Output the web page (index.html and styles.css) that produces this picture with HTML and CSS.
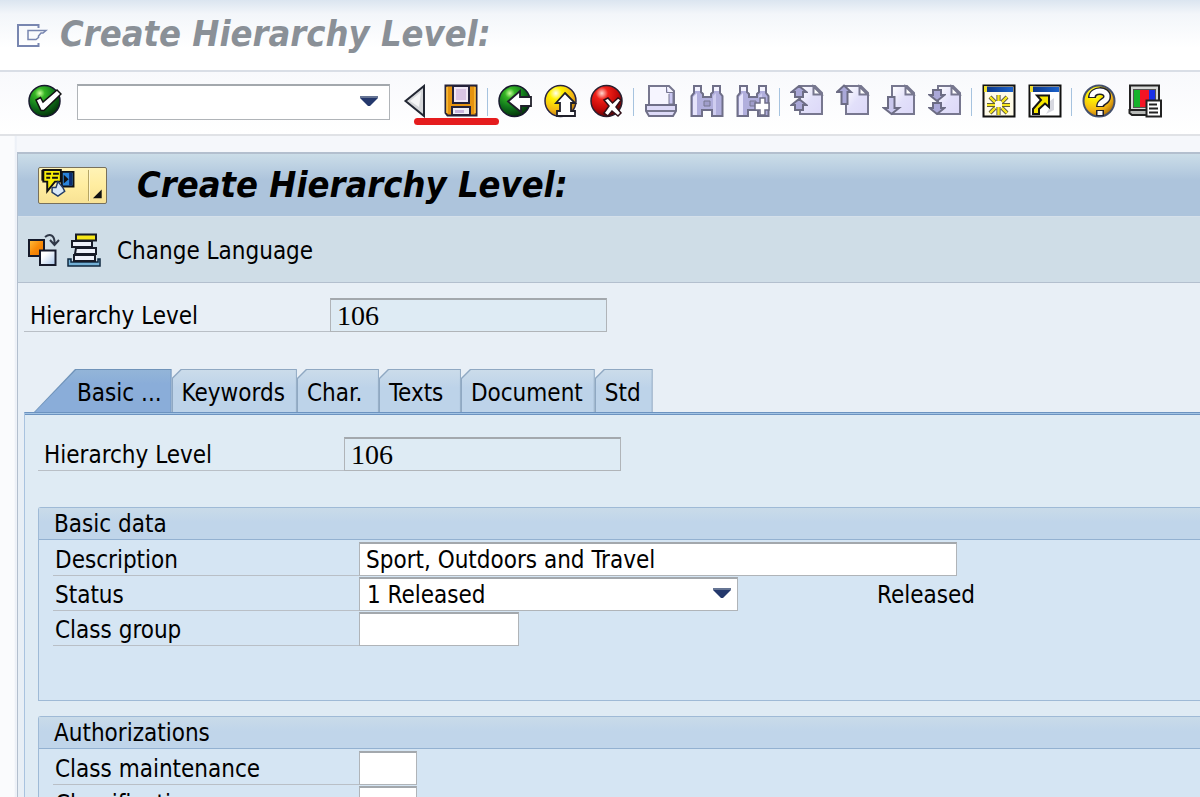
FILE: index.html
```html
<!DOCTYPE html>
<html lang="en">
<head>
<meta charset="utf-8">
<title>Create Hierarchy Level:</title>
<link rel="stylesheet" href="styles.css">
</head>
<body>
<svg class="defs" aria-hidden="true">
  <defs>
    <radialGradient id="green" cx="0.35" cy="0.25" r="0.8"><stop offset="0" stop-color="#c8ff9a"/><stop offset="0.2" stop-color="#35b524"/><stop offset="0.55" stop-color="#127a1c"/><stop offset="1" stop-color="#022c08"/></radialGradient>
    <radialGradient id="yellow" cx="0.35" cy="0.25" r="0.8"><stop offset="0" stop-color="#fffff0"/><stop offset="0.25" stop-color="#fff200"/><stop offset="0.7" stop-color="#f3b414"/><stop offset="1" stop-color="#a86a08"/></radialGradient>
    <radialGradient id="red" cx="0.35" cy="0.25" r="0.8"><stop offset="0" stop-color="#ffd8d0"/><stop offset="0.25" stop-color="#f02018"/><stop offset="0.65" stop-color="#c00808"/><stop offset="1" stop-color="#4a0204"/></radialGradient>
    <linearGradient id="window" x1="0" x2="1"><stop offset="0" stop-color="#0a3484"/><stop offset="1" stop-color="#1b62cc"/></linearGradient>
    <linearGradient id="lilac" x1="0" x2="1" y1="0" y2="1"><stop offset="0" stop-color="#ffffff"/><stop offset="0.5" stop-color="#e2e0fa"/><stop offset="1" stop-color="#dcd8f8"/></linearGradient>
    <linearGradient id="orange" x1="0" x2="1" y1="0" y2="1"><stop offset="0" stop-color="#ffc040"/><stop offset="0.5" stop-color="#f88a08"/><stop offset="1" stop-color="#e87400"/></linearGradient>
    <linearGradient id="ice" x1="0" x2="1" y1="0" y2="1"><stop offset="0.3" stop-color="#ffffff"/><stop offset="1" stop-color="#a8c4e8"/></linearGradient>
    <symbol id="page" viewBox="0 0 34 34"><path d="M10 2H25L32 9V30H10Z" fill="url(#lilac)" stroke="#77778f" stroke-width="2"/><path d="M23.500 2.500V10.500H31.500Z" fill="#fff" stroke="#77778f" stroke-width="2"/></symbol>
    <symbol id="arrow" viewBox="0 0 18 13"><path d="M9 1L16.500 7H13V12H5V7H1.500Z" fill="#aaa8d8" stroke="#6c6c84" stroke-width="2"/></symbol>
    <symbol id="binoculars" viewBox="0 0 34 34"><path d="M4 2H11V8L13 10V13H21V10L23 8V2H30V9L32.500 12V32H22V26H12V32H1.500V12L4 9Z" fill="#b1afdd" stroke="#6f6f88" stroke-width="2"/><path d="M5 3H10V7H5ZM24 3H29V7H24Z" fill="#f4f3ff"/><path d="M4 12L7 9V31H3V13Z" fill="#e6e4fb"/><path d="M23 12L26 9V31H23Z" fill="#cfcdf0"/><path d="M14 17H20V22H14Z" fill="#a09ecb" stroke="#77778f"/></symbol>
  </defs>
</svg>

<header class="titlebar">
  <svg class="exit-icon" viewBox="0 0 32 26" fill="none" stroke="#7886b0" stroke-width="2"><path d="M22.500 7V4H2V25H22.500V22"/><path d="M12 9.500H30L27 12H25L22.500 15V16.500L20 18.500H12Z" stroke-width="1.500"/></svg>
  <h1 class="title">Create Hierarchy Level:</h1>
</header>

<div class="toolbar" role="toolbar" aria-label="Standard">
  <button class="tool" aria-label="Enter"><svg viewBox="0 0 34 34"><circle cx="16.500" cy="17" r="15.500" fill="url(#green)" stroke="#18182e" stroke-width="1.500"/><path d="M8 16L12.500 13.500L15 18L29 6L33 10L16 26.500H13Z" fill="#fff" stroke="#111" stroke-width="1.500"/></svg></button>
  <div class="combo">
    <input class="field command" type="text" aria-label="Command">
    <button class="combo-open" aria-label="Command history"><svg viewBox="0 0 18 10"><path d="M0 0H18V2L10 10H8L0 2Z" fill="#24386c"/><path d="M0 0H18V2H0Z" fill="#667594"/></svg></button>
  </div>
  <button class="tool" aria-label="Close command field"><svg viewBox="0 0 34 34"><path d="M26 2V32L7.500 17Z" fill="#d5d7da" stroke="#222733" stroke-width="2"/><path d="M23 8L12 17L21 23Z" fill="#f4f5f6"/></svg></button>
  <button class="tool" aria-label="Save"><svg viewBox="0 0 34 34"><path d="M1.500 1.500H32.500V31.500H3.500L1.500 29Z" fill="#e5930f" stroke="#25233a" stroke-width="2"/><path d="M9 2H25V19H9Z" fill="#f1e8f6" stroke="#25233a" stroke-width="2"/><path d="M12 5H22V16H12Z" fill="#dac5e4"/><path d="M8 23H26V31H8Z" fill="#f2eff6" stroke="#25233a" stroke-width="2"/><path d="M11 26H20V29H11Z" fill="#cbb6de"/><path d="M3 3V29M31 3V29" stroke="#ffc23e" stroke-width="1.500"/></svg></button>
  <span class="sep"></span>
  <button class="tool" aria-label="Back"><svg viewBox="0 0 34 34"><circle cx="16.500" cy="17" r="15.500" fill="url(#green)" stroke="#18182e" stroke-width="1.500"/><path d="M10 17.500L22 7V13H33V22H23V28Z" fill="#fff" stroke="#20202a" stroke-width="1.800"/></svg></button>
  <button class="tool" aria-label="Exit"><svg viewBox="0 0 34 34"><circle cx="16.500" cy="17" r="15.500" fill="url(#yellow)" stroke="#282340" stroke-width="1.500"/><path d="M21 9L31 19H27V27H31V32H13V27H16V19H12Z" fill="#fff" stroke="#20202a" stroke-width="1.800"/></svg></button>
  <button class="tool" aria-label="Cancel"><svg viewBox="0 0 34 34"><circle cx="16.500" cy="17" r="15.500" fill="url(#red)" stroke="#282030" stroke-width="1.500"/><path d="M14 16L18 14L22.500 19L28 14L31 16L26 23L31 29L28 32L22 27L18 32L14 29L19 22Z" fill="#fff" stroke="#301018" stroke-width="1.500"/></svg></button>
  <span class="sep"></span>
  <button class="tool" aria-label="Print"><svg viewBox="0 0 34 34"><path d="M5 21V2H25L30 7V21Z" fill="#f6f5ff" stroke="#77778f" stroke-width="2"/><path d="M22.500 2V8.500H29V20H25V10" fill="#cac7f2" stroke="#77778f"/><path d="M2 21H32V27L29 32H5L2 27Z" fill="#dddaf8" stroke="#6f6f88" stroke-width="2"/><path d="M3 27H31" stroke="#77778f" stroke-width="2"/></svg></button>
  <button class="tool" aria-label="Find"><svg viewBox="0 0 34 34"><use href="#binoculars"/></svg></button>
  <button class="tool" aria-label="Find next"><svg viewBox="0 0 34 34"><use href="#binoculars"/><path d="M24 14H29V19H33V26H29V31H24V26H19V19H24Z" fill="#fff" stroke="#6f6f88" stroke-width="1.500"/></svg></button>
  <span class="sep"></span>
  <button class="tool" aria-label="First page"><svg viewBox="0 0 34 34"><use href="#page"/><use href="#arrow" x="0" y="1" width="18" height="13"/><use href="#arrow" x="0" y="14" width="18" height="13"/></svg></button>
  <button class="tool" aria-label="Previous page"><svg viewBox="0 0 34 34"><use href="#page"/><path d="M8 1.500L15 8H11.500V20H5.500V8H1Z" fill="#aaa8d8" stroke="#6c6c84" stroke-width="2"/></svg></button>
  <button class="tool" aria-label="Next page"><svg viewBox="0 0 34 34"><use href="#page"/><path d="M6 13H12.500V24H17L9.500 30L2 24H6Z" fill="#c9c7ed" stroke="#6c6c84" stroke-width="2"/></svg></button>
  <button class="tool" aria-label="Last page"><svg viewBox="0 0 34 34"><use href="#page"/><g transform="matrix(1 0 0 -1 0 31)"><use href="#arrow" x="0" y="0" width="18" height="13"/><use href="#arrow" x="0" y="13" width="18" height="13"/></g></svg></button>
  <span class="sep"></span>
  <button class="tool" aria-label="New session"><svg viewBox="0 0 34 34"><path d="M1.500 1.500H32.500V32.500H1.500Z" fill="#fffbe8" stroke="#111" stroke-width="2"/><path d="M3 3H31V8H3Z" fill="url(#window)"/><path d="M2 2H5V8H2Z" fill="#f0df30"/><path d="M16.500 11V17M16.500 23V31M5 21H13M20 21H28M8 13L13 18M25 13L20 18M8 29L13 24M25 29L20 24" stroke="#303044" stroke-width="4"/><path d="M16.500 11V17M16.500 23V31M5 21H13M20 21H28M8 13L13 18M25 13L20 18M8 29L13 24M25 29L20 24" stroke="#f5e51c" stroke-width="2.500"/></svg></button>
  <button class="tool" aria-label="Create shortcut"><svg viewBox="0 0 34 34"><path d="M1.500 1.500H32.500V32.500H1.500Z" fill="#fff" stroke="#111" stroke-width="2"/><path d="M3 3H31V8H3Z" fill="url(#window)"/><path d="M2 2H5V8H2Z" fill="#f0df30"/><path d="M22 23V17L26 14V26L18 30Z" fill="#d7d8e0"/><path d="M9 11.500H21V23L17 19.500L11 25V30H5V25L13 16Z" fill="#f7e600" stroke="#151515" stroke-width="2"/></svg></button>
  <span class="sep"></span>
  <button class="tool" aria-label="Help"><svg viewBox="0 0 34 34"><circle cx="17" cy="17" r="15.500" fill="url(#yellow)" stroke="#44506c" stroke-width="2"/><path d="M10 14C10 5 26 5 25 13C25 18 18 17 18 23M18 26V32" fill="none" stroke="#20202a" stroke-width="8"/><path d="M10 13C10 5 26 5 25 13C25 18 18 17 18 22M18 27V31" fill="none" stroke="#fff" stroke-width="5"/></svg></button>
  <button class="tool" aria-label="Customize layout"><svg viewBox="0 0 34 34"><path d="M2 1.500H31V26H2Z" fill="#d8dad8" stroke="#222" stroke-width="2"/><path d="M5 5H28V24H5Z" fill="#555"/><path d="M6 6H12V23H6Z" fill="#16b32c"/><path d="M12 6H21V23H12Z" fill="#f41424"/><path d="M21 6H27V23H21Z" fill="#1830e8"/><path d="M1.500 26H20V31H4L1.500 29Z" fill="#b8bab8" stroke="#222" stroke-width="2"/><path d="M18.500 16.500H33V32.500H18.500Z" fill="#fff" stroke="#222" stroke-width="2"/><path d="M21 20.500H29M21 24.500H30M21 28.500H30" stroke="#222" stroke-width="2"/></svg></button>
  <span class="marker"></span>
</div>

<main class="work">
  <div class="screen">
    <div class="screen-title">
      <button class="services" aria-label="Services for object">
        <svg viewBox="0 0 68 36"><path d="M50.500 2V34" stroke="#b09f60"/><path d="M51.500 2V34" stroke="#fff6cc"/><path d="M64 22V31H55Z" fill="#111"/><path d="M4 2H22V14H16L8 24V14H4Z" fill="#f8ee08" stroke="#111" stroke-width="2"/><path d="M3 2V13" stroke="#111" stroke-width="2"/><path d="M7 6H12M14 6H20M7 10H11M13 10H19" stroke="#111" stroke-width="2"/><path d="M23 4H35V19H23Z" fill="#2a84da" stroke="#111" stroke-width="2"/><path d="M32 5V18" stroke="#0a2c70" stroke-width="3"/><path d="M25 7L30 11.500L25 16Z" fill="#111"/><path d="M19 14L24 20L26 24L19 29L13 25V20L17 20Z" fill="#d8e8f8" stroke="#233c66" stroke-width="1.500"/></svg>
      </button>
      <h2 class="title">Create Hierarchy Level:</h2>
    </div>
    <div class="actions">
      <button class="action" aria-label="Copy from"><svg viewBox="0 0 34 34"><path d="M2 7H17V23H2Z" fill="url(#orange)" stroke="#15192a" stroke-width="2"/><path d="M13 17.500H28.500V32H13Z" fill="url(#ice)" stroke="#15192a" stroke-width="2"/><path d="M18 4C23 0 28 2 27.500 11M23 7L27.500 12L32 7" fill="none" stroke="#303848" stroke-width="2"/></svg></button>
      <button class="action" aria-label="Hierarchy"><svg viewBox="0 0 34 34"><path d="M1 26H4V29H31V26H33V33H1Z" fill="#73b0d6" stroke="#102840" stroke-width="1.500"/><path d="M9 1.500H29V7.500H9Z" fill="#f8e818" stroke="#171b28" stroke-width="2"/><path d="M5 8H25V14H5ZM9 15H29V21H8ZM7 22H28V28H7Z" fill="#eef1fa" stroke="#171b28" stroke-width="2"/></svg></button>
      <button class="action text">Change Language</button>
    </div>

    <div class="content">
      <div class="row">
        <label class="label" for="level">Hierarchy Level</label>
        <input class="field readonly" id="level" type="text" value="106" readonly>
      </div>

      <div class="tabs" role="tablist">
        <button class="tab active" role="tab" aria-selected="true">Basic ...</button>
        <button class="tab" role="tab">Keywords</button>
        <button class="tab short" role="tab">Char.</button>
        <button class="tab short" role="tab">Texts</button>
        <button class="tab" role="tab">Document</button>
        <button class="tab" role="tab">Std</button>
      </div>

      <div class="panel" role="tabpanel">
        <div class="row">
          <label class="label" for="tab-level">Hierarchy Level</label>
          <input class="field readonly" id="tab-level" type="text" value="106" readonly>
        </div>

        <section class="group basic">
          <h3 class="group-title">Basic data</h3>
          <div class="row">
            <label class="label" for="description">Description</label>
            <input class="field description" id="description" type="text" value="Sport, Outdoors and Travel">
          </div>
          <div class="row">
            <label class="label" for="status">Status</label>
            <div class="combo">
              <select class="field status" id="status"><option>1 Released</option></select>
              <svg class="combo-arrow" viewBox="0 0 18 10"><path d="M0 0H18V2L10 10H8L0 2Z" fill="#24386c"/><path d="M0 0H18V2H0Z" fill="#667594"/></svg>
            </div>
            <span class="status-text">Released</span>
          </div>
          <div class="row">
            <label class="label" for="class-group">Class group</label>
            <input class="field class-group" id="class-group" type="text">
          </div>
        </section>

        <section class="group">
          <h3 class="group-title">Authorizations</h3>
          <div class="row">
            <label class="label" for="maintenance">Class maintenance</label>
            <input class="field auth" id="maintenance" type="text">
          </div>
          <div class="row">
            <label class="label" for="classification">Classification</label>
            <input class="field auth" id="classification" type="text">
          </div>
        </section>
      </div>
    </div>
  </div>
</main>
</body>
</html>
```

FILE: styles.css
```css
* {
  box-sizing: border-box;
}

body {
  display: flex;
  flex-direction: column;
  height: 100vh;
  margin: 0;
  overflow: hidden;
  background: #f5f7fb;
  color: #000;
  font: 24px/32px "DejaVu Sans Condensed", "DejaVu Sans", sans-serif;
}

button,
input,
select {
  margin: 0;
  padding: 0;
  border: 0;
  border-radius: 0;
  background: none;
  color: inherit;
  font: inherit;
}

svg {
  display: block;
}

.defs {
  position: absolute;
  width: 0;
  height: 0;
}

.title {
  margin: 0;
  font: italic bold 36px/44px "DejaVu Sans Condensed", "DejaVu Sans", sans-serif;
  white-space: nowrap;
}

.titlebar {
  display: flex;
  flex-shrink: 0;
  align-items: center;
  gap: 12px;
  height: 72px;
  padding: 0 16px 2px;
  border-bottom: 2px solid #d9dee6;
  background: linear-gradient(#dbe5f0, #f3f6fa 14px, #fff 48px);
}

.titlebar .title {
  color: #8a9097;
}

.exit-icon {
  width: 32px;
  height: 26px;
}

.toolbar {
  position: relative;
  display: flex;
  flex-shrink: 0;
  align-items: center;
  height: 64px;
  padding: 0 22px 2px;
  border-bottom: 2px solid #e0e2e6;
  background: linear-gradient(#f8f9fc, #fff);
}

.tool {
  display: flex;
  flex: 0 0 46px;
  align-items: center;
  justify-content: center;
  height: 44px;
  padding-bottom: 2px;
}

.tool svg,
.action svg {
  width: 34px;
  height: 34px;
}

.sep {
  flex: 0 0 8px;
  height: 28px;
  background: linear-gradient(#a6c3df, #a6c3df) 3px 0 / 1px 100% no-repeat;
}

.marker {
  position: absolute;
  left: 414px;
  top: 46px;
  width: 85px;
  height: 7px;
  border-radius: 4px;
  background: #e51c1e;
}

.combo {
  position: relative;
  display: flex;
}

.toolbar .combo {
  margin: 0 2px 0 9px;
}

.combo-open,
.combo-arrow {
  position: absolute;
  right: 12px;
  top: 12px;
  width: 18px;
}

.combo-arrow {
  right: 7px;
  top: 11px;
  pointer-events: none;
}

.field {
  height: 34px;
  padding: 0 6px;
  border: 1px solid #b0b4b8;
  border-top: 2px solid #a3a8ad;
  background: #fff;
  appearance: none;
}

.command {
  width: 313px;
  height: 36px;
  padding-right: 34px;
}

.work {
  flex: 1;
  padding: 16px 0 0 17px;
  background: linear-gradient(90deg, #fafbfd 14px, #e8edf5 16px, transparent 17px);
}

.screen {
  display: flex;
  flex-direction: column;
  min-height: 100%;
  border-top: 2px solid #b3bfce;
  border-left: 1px solid #b3bfce;
  background: #e8eff6;
}

.screen-title {
  display: flex;
  align-items: center;
  gap: 30px;
  height: 63px;
  padding: 0 20px;
  border-bottom: 1px solid #d5e0ea;
  background: linear-gradient(#cbdde8, #adc4dc 26px);
}

.services {
  width: 69px;
  height: 37px;
  border: 1px solid #77705c;
  border-radius: 2px;
  background: linear-gradient(#fff3b6, #ffeda0 50%, #f8e294);
}

.services svg {
  width: 100%;
  height: 100%;
}

.actions {
  display: flex;
  align-items: center;
  gap: 6px;
  height: 66px;
  padding-left: 9px;
  border-bottom: 1px solid #b3bfce;
  background: #cfdde7;
}

.action.text {
  margin-left: 10px;
  padding-top: 2px;
}

.content {
  flex: 1;
  padding: 15px 0 0 6px;
}

.row {
  display: flex;
  height: 35px;
}

.label {
  width: 306px;
  height: 34px;
  padding-left: 6px;
  border-bottom: 1px solid #b9bfc6;
  line-height: 36px;
  white-space: nowrap;
}

.readonly {
  width: 277px;
  background: #deebf4;
  font: 28px/30px "Liberation Serif", serif;
}

.group .label {
  padding-left: 2px;
}

.tabs {
  display: flex;
  margin: 36px 0 0 10px;
}

.tab {
  position: relative;
  z-index: 0;
  height: 43px;
  padding: 4px 12px 0 10px;
  background: #8fa8c2;
  clip-path: polygon(0 9px, 9px 0, 100% 0, 100% 100%, 0 100%);
  text-align: left;
  white-space: nowrap;
}

.tab.short {
  min-width: 82px;
}

.tab::before {
  content: "";
  position: absolute;
  z-index: -1;
  inset: 1px 1px 0;
  background: linear-gradient(#cbdcea, #bdd3e9 18px);
  clip-path: polygon(0 9px, 9px 0, 100% 0, 100% 100%, 0 100%);
}

.tab.active {
  padding: 4px 10px 0 43px;
  background: #6f93b9;
  clip-path: polygon(41px 0, 100% 0, 100% 100%, 0 100%);
}

.tab.active::before {
  background: linear-gradient(#93b5d8, #8aadd9 14px);
  clip-path: polygon(41px 0, 100% 0, 100% 100%, 0 100%);
}

.panel {
  padding: 24px 0 40px 13px;
  border-top: 1px solid #6c93c0;
  border-left: 1px solid #a9c3df;
  background: linear-gradient(#a3c4e4 1px, #6c93c0 1px, #6c93c0 2px, #dfebf4 2px);
}

.group {
  margin-bottom: 15px;
  padding-bottom: 16px;
  border: 1px solid #9fbad6;
  border-right: 0;
  border-radius: 3px 0 0 0;
  background: #d5e5f3;
}

.panel > .row {
  margin-bottom: 35px;
}

.basic {
  padding-bottom: 53px;
}

.group-title {
  margin: 0 0 2px;
  padding: 2px 0 0 15px;
  border-bottom: 1px solid #93b1d1;
  background: linear-gradient(#c9dbe9, #c0d5ea 14px);
  font: inherit;
  line-height: 29px;
}

.group .row {
  padding-left: 14px;
}

.description {
  width: 598px;
}

.status {
  width: 379px;
  padding-left: 7px;
}

.status-text {
  margin-left: 139px;
  line-height: 36px;
}

.class-group {
  width: 160px;
}

.auth {
  width: 58px;
}
```
